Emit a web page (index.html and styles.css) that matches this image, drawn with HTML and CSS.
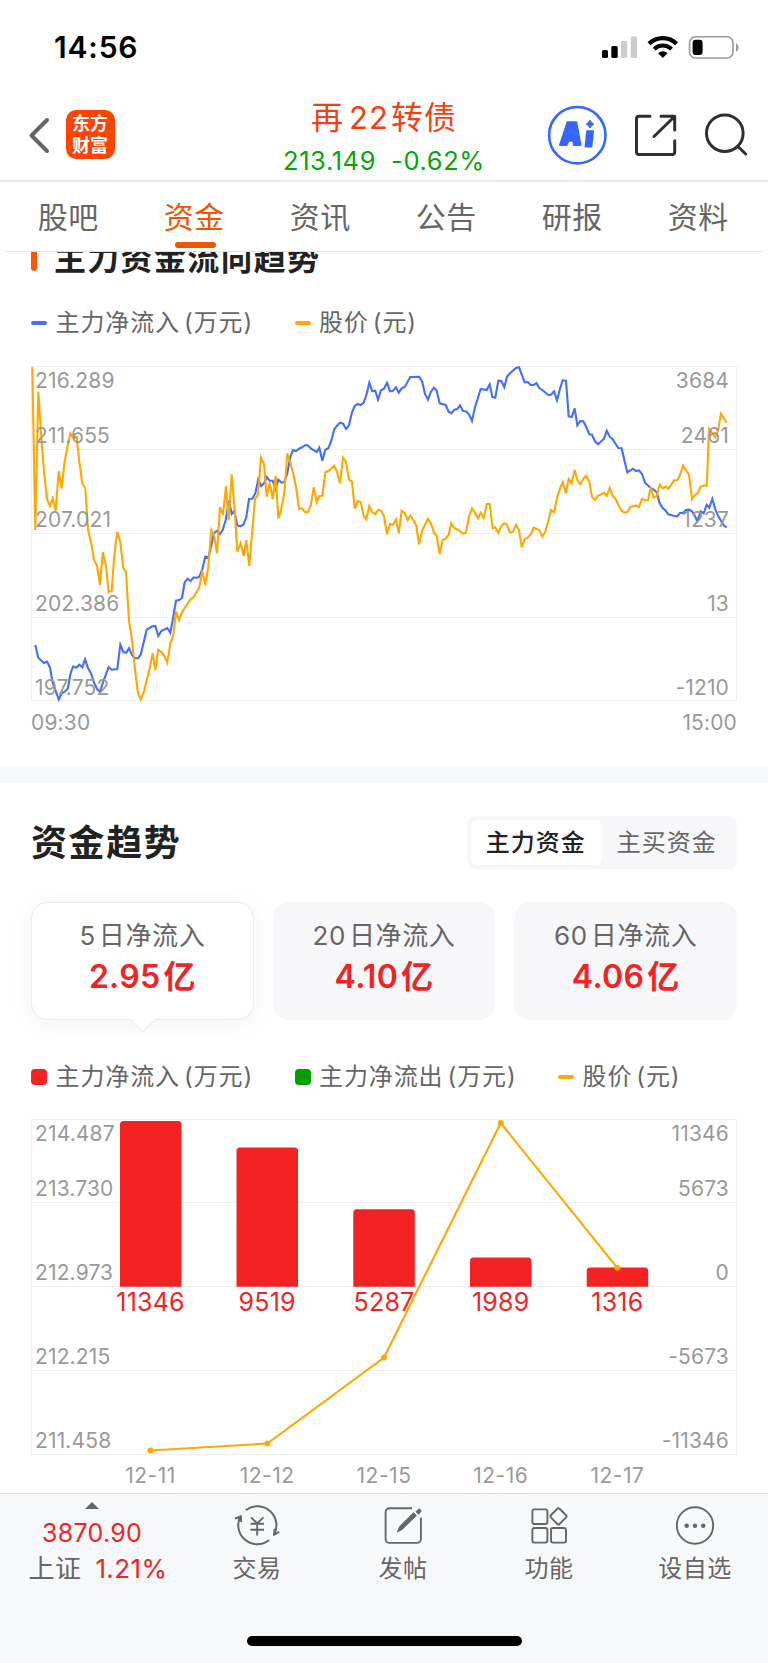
FILE: index.html
```html
<!DOCTYPE html>
<html lang="zh-CN">
<head>
<meta charset="utf-8">
<meta name="viewport" content="width=device-width, initial-scale=1">
<title>再22转债 - 资金</title>
<link rel="stylesheet" href="styles.css">
</head>
<body>
<div class="screen">
  <div class="status">
    <span class="clock">14:56</span>
    <svg class="status-icons" width="140" height="26" viewBox="600 34 140 26">
      <rect x="602" y="50" width="6" height="8" rx="1.5"/>
      <rect x="611.3" y="46" width="6.4" height="12" rx="1.5"/>
      <rect x="621" y="41" width="6.2" height="17" rx="1.5" fill="#ccc"/>
      <rect x="630.7" y="36.3" width="6.3" height="21.7" rx="1.5" fill="#ccc"/>
      <g fill="none" stroke="#000" stroke-width="4.1">
        <path d="M649 43.8a19.5 19.5 0 0 1 27.6 0"/>
        <path d="M654.2 49.1a12.2 12.2 0 0 1 17.2 0"/>
      </g>
      <path d="M662.8 58l-4.7-4.8a6.7 6.7 0 0 1 9.4 0z"/>
      <rect x="689.6" y="36.7" width="43.4" height="21.3" rx="6" fill="none" stroke="#999" stroke-width="1.6"/>
      <rect x="692.6" y="39.8" width="10" height="15.2" rx="3.2"/>
      <path d="M736 43.3c3.4 1.2 3.4 7.200 0 8.400z" fill="#999"/>
    </svg>
  </div>

  <header class="header">
    <div class="head-left">
      <svg class="back" width="22" height="38" viewBox="0 0 22 38"><path d="M19 3 3.500 18.500 19 34" fill="none" stroke="#666" stroke-width="4" stroke-linecap="round" stroke-linejoin="round"/></svg>
      <div class="logo"><span>东方</span><span>财富</span></div>
    </div>
    <div class="head-title">
      <div class="name">再<b>22</b>转债</div>
      <div class="quote"><span>213.149</span><span>-0.62%</span></div>
    </div>
    <svg class="head-icons" width="204" height="62" viewBox="546 104 204 62">
      <circle cx="577.3" cy="135.200" r="28.200" fill="none" stroke="#3666ff" stroke-width="2.600"/>
      <g fill="#3666ff" stroke="#3666ff" stroke-width="2" stroke-linejoin="round">
        <path fill-rule="evenodd" d="M567.500 122.200h8.800l4.200 22.800h-6.500l-.7-4.200h-5l-1.800 4.200h-6.500zM570.500 135.500h2.200l-.5-5z"/>
        <path d="M587.200 131.200h5.800l-1.600 15.300h-5.800z"/>
        <path d="M590 120.200q1.200 2.700 3.900 3.900-2.700 1.200-3.900 3.900-1.200-2.700-3.900-3.900 2.700-1.200 3.900-3.900z" stroke-width="1"/>
      </g>
      <g fill="none" stroke="#2f2f2f" stroke-width="3" stroke-linecap="round" stroke-linejoin="round">
        <path d="M650 116.300H639a2.500 2.500 0 0 0-2.500 2.500v33.200a2.500 2.500 0 0 0 2.500 2.500h33.200a2.500 2.500 0 0 0 2.500-2.500v-11.200M661 116.300h13.700v13.700M673.500 117.500 654 136.500"/>
        <circle cx="724.800" cy="133.200" r="18.300"/>
        <path d="M738 146.500 745.700 154"/>
      </g>
    </svg>
  </header>

  <nav class="tabs">
    <span class="tab">股吧</span>
    <span class="tab on">资金</span>
    <span class="tab">资讯</span>
    <span class="tab">公告</span>
    <span class="tab">研报</span>
    <span class="tab">资料</span>
  </nav>

  <section class="flow">
    <h2 class="flow-title"><i></i><span>主力资金流向趋势</span></h2>
    <div class="legend">
      <span class="key"><i class="dash blue"></i>主力净流入<em>(</em>万元)</span>
      <span class="key"><i class="dash orange"></i>股价<em>(</em>元)</span>
    </div>
    <svg class="chart" width="768" height="386" viewBox="0 356 768 386">
      <g class="grid">
        <path d="M31.500 366.500H736.500V700.500H31.500zM31.500 449.500H736.500M31.500 533.500H736.500M31.500 617.500H736.500"/>
      </g>
      <polyline class="line blue-line" points="35.3,645 38.3,657.7 44,663 47,661.7 50,667.7 52.7,682.7 58.7,699.3 61.7,693.3 64.7,691.7 67.7,689 70.7,672.7 73.3,666.3 76.3,667.7 79.3,664.7 82.3,667.3 85,659.3 88,668 91,673.3 94,682.7 97,689 100,691.7 103,682.3 108.7,667 111.7,669.7 117.3,669 120.3,644.7 123.3,652 126.3,652.7 129,648.3 132,655 135,658.3 138,658.3 140.7,654.7 146.7,629.7 152.3,626.3 155.3,626 158.3,636 161.3,631 167.3,628 170.3,632.7 173.3,616.7 176,600.7 179,600 182,598 184.7,582.3 187.7,578.7 190.7,581 193.7,577.3 196.7,578 199.3,576.7 202.3,569.3 205.3,556.7 208.3,557.7 211,546.7 214,533.3 217,530.7 220,534 222.7,530 225.7,520 229,500.7 231.7,514 234.3,511 237.3,525.3 240.3,526.3 243.3,524.7 246.3,517.3 249,499 252.3,498.7 255.3,493.3 258.3,479.3 261,486 264,483.3 266.7,477 269.7,480.7 272.7,480.7 275.7,489.3 278.3,479.7 281.7,482.7 284.3,482.3 287.3,473.3 290.3,456.7 293,450 296,451 299,448.7 302,447.3 305,445.3 307.7,445.3 310.7,448.3 316.7,452 319.3,447.7 322.3,460.7 325.3,449.7 328.3,448.3 331.3,440.7 334.3,429.3 337,425.7 340,422.7 343,423.7 346,429 349,425.3 352,412.3 354.7,406 357.7,404 360.7,405 363.7,402.7 366.7,394 369.3,382.7 372.3,391.3 375.3,390.7 378,399.7 381,390.3 384,388.7 387,382.7 390,391.3 393,390.7 396,387.3 398.7,392.7 401.7,388.3 404.7,387 410.3,377 419.3,376.7 422.3,382 425,394 428,399.7 431,391.7 434,387.7 436.7,390.7 439.7,403.3 445.7,405 448.7,411.7 451.3,413.3 454.3,409.7 457.3,409 460,405.3 463,411 466,411.3 469,414.3 472,421 475,407.3 480.7,389 486.7,390 489.7,384.3 492.3,397 495.3,397.7 498.3,380.7 501.3,381 504.3,387.3 507,376.7 510,373.3 516,368 519,367.3 524.7,382.3 527.7,382 530.7,385 533.7,385 536.3,383 539.3,388 542.3,390 548.3,395 551,394.7 554,391.3 557,400.3 560,388.7 562.7,380.3 566,380.7 568.7,416.3 571.7,417 574.7,408.3 577.3,425.3 580.3,421 583.3,421.3 586.3,427 589.3,434.3 592,434.7 595,441.3 598,444.3 604,438.7 606.7,430.7 609.7,436.7 612.7,439.3 618.3,448 621.7,448.3 624.3,460 627.3,472.3 633,468.7 636,471 639,470.3 642,474 645,482.7 650.7,488 653.7,489.7 656.7,492.3 659.7,503.3 662.7,508 665.3,510.3 668.3,514.3 674.3,516 677.3,516.3 680,513 683,513 686,510 689,509.7 692,511.3 695,516.3 697.3,521 700.7,511.3 703.7,513.3 706.7,504.7 709.3,507.7 712.3,499 715.3,509.3 718.3,516.3 724,525.7 726.7,527.3"/>
      <polyline class="line orange-line" points="32.3,367.3 35.3,530 38.3,391.7 41.3,436.7 44,471.7 47,499.3 50,506 52.7,498.3 55.7,510.7 58.7,471 61.7,488.3 64.7,460.7 67.7,446 70.3,433.3 73.3,437.7 76.7,436.7 79.3,461.7 82.3,483.7 85.3,488.3 88,530 91,541.7 94,560 97,565.7 100,585 102.7,552.3 105.7,564 108.7,592 111.7,590.7 114.3,555 117.3,531.7 120.3,542.3 123.3,567.7 126,572.3 129,621 132,640 135,670 138,693.3 140.7,699.3 144,691.7 146.7,680 149.7,668.3 152.7,653.3 155.3,670 158.3,649.7 161.3,652 164.3,656 167.3,662.7 170.3,643.3 173.3,635 176,611.7 179,620 182,612.3 190.7,599 193.7,597.3 199.3,587.3 202.3,570.7 205.3,585 208.3,566.7 211.3,530 214,535 217,553.3 220,507 223,515 226,486 228.7,520 231.7,474.3 234.7,510 237.3,551.7 240.7,543.3 243.7,556 246.3,540 249.3,566 252.3,530 255,499.3 258,494.3 261,457.7 264,464.3 266.7,496.7 269.7,482.7 272.7,499.3 275.7,476 278.3,518.3 281.3,509.3 284.3,493.3 287.3,453.3 290.3,462.7 293.3,474.3 296,486.7 299,508.7 302,508.3 305,512 308,512 311,504.3 313.7,487.3 316.7,502 319.3,496 322.3,495.7 325.3,472.3 328.3,471 334.3,465.7 337,472 340,483.3 343,457.7 346,462 349,479.7 352,481.7 354.7,508.7 357.7,501 360.7,502 363.7,515.7 366.3,519.3 369.3,506 372.3,512.3 375.3,514 378.3,509.7 381,510.7 384,516 387,534.3 390,524 393,524.7 396,519.3 398.7,533.3 401.7,510.7 404.7,513 407.7,520 410.3,515.7 413.3,520.3 416.3,525.7 419,544.3 422.3,530.3 428,518.7 431,523.7 434,532.7 436.7,536 439.7,554 442.7,540 445.7,538.7 448.7,534.7 451.3,523.3 454.3,528 460,531 463,533.7 466,532.7 469,516.7 472,508.3 475,513 478,518.3 480.7,512.7 483.7,518 486.7,504 489.7,504 492.7,528.3 495.3,527.3 498.3,533 501.3,526.3 504.3,523 507,524.7 510,532.7 513,531.7 516,525 519,530.3 521.7,547.3 524.7,539 527.7,537.7 530.7,534.3 533.7,527.7 539.3,530 542.3,536.3 545.3,531.7 548.3,520.7 551,510 554,512.3 557,497.7 560,488.3 562.7,482.3 565.7,493.3 568.7,479 571.7,483.3 574.7,470 577.3,480.3 580.3,484.3 583.3,478.7 586.3,476 589.3,481.7 592,497 595,500 598,495.7 604,492.7 606.7,496 609.7,488 612.7,495.7 615.7,499 618.7,505.7 621.7,510.7 624.3,512.7 627.3,512 630.3,507 636,505.7 639,507 642,498.7 645,500.3 648,500.3 650.7,487.3 653.7,497.7 656.7,496 659.7,484.7 662.7,488.3 665.3,486.7 668.3,488.7 674.3,480.3 677.3,480.3 680,475 683,465.7 689,474.7 692,499.3 695,495 697.7,493.3 700.7,486.7 703.7,485.3 706.7,486 709,429 715.3,437.3 718.3,429 721,413.7 726.7,422.7"/>
      <g class="axis">
        <text x="35" y="387.500">216.289</text><text x="35" y="442.500">211.655</text><text x="35" y="526.500">207.021</text><text x="35" y="610.500">202.386</text><text x="35" y="694.500">197.752</text>
        <text x="31" y="729.500">09:30</text>
      </g>
      <g class="axis end">
        <text x="729" y="387.500">3684</text><text x="729" y="442.500">2461</text><text x="729" y="526.500">1237</text><text x="729" y="610.500">13</text><text x="729" y="694.500">-1210</text>
        <text x="737" y="729.500">15:00</text>
      </g>
    </svg>
  </section>

  <section class="trend">
    <div class="trend-head">
      <h2>资金趋势</h2>
      <div class="switch"><span class="on">主力资金</span><span>主买资金</span></div>
    </div>
    <div class="cards">
      <div class="card on"><p>5<u></u>日净流入</p><strong>2.95<u></u>亿</strong></div>
      <div class="card"><p>20<u></u>日净流入</p><strong>4.10<u></u>亿</strong></div>
      <div class="card"><p>60<u></u>日净流入</p><strong>4.06<u></u>亿</strong></div>
    </div>
    <div class="legend">
      <span class="key"><i class="block red"></i>主力净流入<em>(</em>万元)</span>
      <span class="key"><i class="block green"></i>主力净流出<em>(</em>万元)</span>
      <span class="key"><i class="dash orange"></i>股价<em>(</em>元)</span>
    </div>
    <svg class="chart" width="768" height="383" viewBox="0 1110 768 383">
      <g class="grid">
        <path d="M31.500 1119.500H736.500V1454.500H31.500zM31.500 1202.500H736.500M31.500 1286.500H736.500M31.500 1370.500H736.500"/>
      </g>
      <g fill="#f42323">
        <path d="M120 1286.700V1124.500q0-3.500 3.500-3.500h54.500q3.500 0 3.500 3.500V1286.700z"/>
        <path d="M236.500 1286.700V1151q0-3.500 3.500-3.500h54.500q3.500 0 3.500 3.500V1286.700z"/>
        <path d="M353.300 1286.700V1212.800q0-3.500 3.500-3.500h54.500q3.500 0 3.500 3.500V1286.700z"/>
        <path d="M470 1286.700V1261q0-3.500 3.500-3.500h54.500q3.500 0 3.500 3.500V1286.700z"/>
        <path d="M586.700 1286.700V1271q0-3.500 3.500-3.500h54.500q3.500 0 3.500 3.500V1286.700z"/>
      </g>
      <g class="values">
        <text x="150.500" y="1310.500">11346</text><text x="267.200" y="1310.500">9519</text><text x="384" y="1310.500">5287</text><text x="500.700" y="1310.500">1989</text><text x="617.400" y="1310.500">1316</text>
      </g>
      <polyline class="line orange-line" points="150.500,1450.500 267.300,1443.500 384,1357.500 500.700,1123 617.300,1267.800"/>
      <g fill="#ffa800"><circle cx="150.500" cy="1450.500" r="3"/><circle cx="267.300" cy="1443.500" r="3"/><circle cx="384" cy="1357.500" r="3"/><circle cx="500.700" cy="1123" r="3"/><circle cx="617.300" cy="1267.800" r="3"/></g>
      <g class="axis">
        <text x="35" y="1141">214.487</text><text x="35" y="1196.300">213.730</text><text x="35" y="1280.300">212.973</text><text x="35" y="1364.300">212.215</text><text x="35" y="1448.300">211.458</text>
      </g>
      <g class="axis end">
        <text x="729" y="1141">11346</text><text x="729" y="1196.300">5673</text><text x="729" y="1280.300">0</text><text x="729" y="1364.300">-5673</text><text x="729" y="1448.300">-11346</text>
      </g>
      <g class="axis mid">
        <text x="150.500" y="1483">12-11</text><text x="267.200" y="1483">12-12</text><text x="384" y="1483">12-15</text><text x="500.700" y="1483">12-16</text><text x="617.400" y="1483">12-17</text>
      </g>
    </svg>
  </section>

  <footer class="bottom">
    <div class="index">
      <svg width="14" height="7" viewBox="0 0 14 7"><path d="M0 7 7 0l7 7z" fill="#666"/></svg>
      <div class="points">3870.90</div>
      <div class="change"><span>上证</span><b>1.21%</b></div>
    </div>
    <div class="item">
      <svg width="46" height="42" viewBox="234 1504 46 42" fill="none" stroke="#666" stroke-width="2" stroke-linecap="round" stroke-linejoin="round">
        <path d="M246.500 1509.700a19 19 0 0 1 27.800 24.300M278.500 1532.200 274 1534.800l.5-5M268.500 1540.500a19 19 0 0 1-28-24.300M235.700 1518.300l5.200-1.900.2 4.800"/>
        <path d="M251 1517.300l6.200 6.200 6.200-6.200M250.500 1523.700h13.500M250.500 1529.700h13.500M257.200 1523.500v12" stroke-width="1.900" stroke-linecap="butt"/>
      </svg>
      <span>交易</span>
    </div>
    <div class="item">
      <svg width="42" height="42" viewBox="382 1504 42 42" fill="none" stroke="#666" stroke-width="1.900">
        <path d="M412 1508.200H389.600a4 4 0 0 0-4 4v26.700a4 4 0 0 0 4 4h27.300a4 4 0 0 0 4-4V1517.500"/>
        <path d="M397.400 1532l2.200-5.400 14-13.900 2.800 2.800-14 13.700zM416 1511.700l2-2 a1.500 1.500 0 0 1 2.500 2.500l-2 2z" fill="#666" stroke-width="1"/>
      </svg>
      <span>发帖</span>
    </div>
    <div class="item">
      <svg width="42" height="42" viewBox="528 1504 42 42" fill="none" stroke="#666" stroke-width="1.900" stroke-linejoin="round">
        <rect x="532.400" y="1509.400" width="15" height="14.600" rx="2"/>
        <rect x="532.400" y="1528" width="15" height="14.600" rx="2"/>
        <rect x="551" y="1528" width="15" height="14.600" rx="2"/>
        <rect x="552.300" y="1510.200" width="12.300" height="12.300" rx="1.500" transform="rotate(45 558.450 1516.350)"/>
      </svg>
      <span>功能</span>
    </div>
    <div class="item">
      <svg width="42" height="42" viewBox="674 1504 42 42" fill="none" stroke="#666" stroke-width="1.900">
        <circle cx="695" cy="1525.500" r="18.200"/>
        <g fill="#666" stroke="none"><circle cx="686.700" cy="1525.700" r="2.200"/><circle cx="695" cy="1525.700" r="2.200"/><circle cx="703.200" cy="1525.700" r="2.200"/></g>
      </svg>
      <span>设自选</span>
    </div>
  </footer>
  <div class="home"><i></i></div>
</div>
</body>
</html>
```

FILE: styles.css
```css
* { box-sizing: border-box; }
body {
  margin: 0;
  background: #fff;
  color: #666;
  font-family: "Inter", "Noto Sans CJK SC", sans-serif;
}
h2, p { margin: 0; }
i, em, b { font-style: normal; font-weight: inherit; }
u { display: inline-block; width: 3px; text-decoration: none; }
svg { display: block; }
.screen { width: 768px; height: 1663px; overflow: hidden; display: flex; flex-direction: column; }

.status { height: 94px; display: flex; justify-content: space-between; padding: 34px 28px 0 54px; flex: none; }
.clock { font-size: 30px; line-height: 27px; font-weight: 600; color: #000; letter-spacing: 0.8px; }

.header { height: 88px; flex: none; display: grid; grid-template-columns: 240px 1fr 240px; border-bottom: 2px solid #ebebeb; }
.head-left { display: flex; padding: 16px 0 0 28px; }
.back { margin: 7px 0 0; width: 22px; height: 38px; }
.logo {
  width: 49px; height: 49px; margin-left: 15.500px; border-radius: 10px; background: #ff4400; color: #fff;
  display: flex; flex-direction: column; align-items: center; padding-top: 2px;
  font: 700 18px/21.500px "Noto Sans CJK SC", sans-serif;
}
.head-title { text-align: center; }
.name { color: #f43f14; font-size: 32px; line-height: 48px; letter-spacing: 1px; font-weight: 390; }
.name b { margin: 0 2px 0 5px; font-size: 31px; }
.quote { color: #0aa30a; font-size: 25.500px; line-height: 36px; margin-top: 1px; display: flex; justify-content: center; gap: 15px; letter-spacing: 0.6px; }
.head-icons { margin: 10px 0 0 18px; }

.tabs { height: 70px; flex: none; margin: 0 6px; display: flex; border-bottom: 1px solid #e2e2e2; background: #fff; position: relative; z-index: 1; }
.tab { flex: 1; padding-right: 1.500px; text-align: center; font-size: 30px; line-height: 70px; letter-spacing: 0.5px; font-weight: 390; position: relative; }
.tab.on { color: #eb5600; }
.tab.on::after { content: ""; position: absolute; left: 50%; bottom: 3px; width: 41px; height: 6px; margin-left: -20px; border-radius: 3px; background: #eb5600; }

.flow { height: 515px; flex: none; overflow: hidden; }
.flow-title { height: 42px; margin-top: -14px; display: flex; align-items: center; padding-left: 31px; color: #222; font-size: 32px; line-height: 42px; letter-spacing: 1.3px; }
.flow-title i { width: 6px; height: 25px; background: #ff5500; border-radius: 3px; margin-right: 17px; margin-top: -1px; }
.legend { display: flex; padding-left: 31px; }
.flow .legend { height: 76px; align-items: center; padding-top: 10px; }
.key { flex: none; width: 263.500px; display: flex; align-items: center; font-size: 24px; line-height: 34px; letter-spacing: 0.9px; font-weight: 390; white-space: nowrap; }
.key em { margin-left: 4px; }
.dash { width: 16px; height: 4px; border-radius: 2px; margin-right: 8.500px; }
.block { width: 16px; height: 16px; border-radius: 4px; margin-right: 8.500px; }
.blue { background: #426ffb; }
.orange { background: #ffa800; }
.red { background: #f42323; }
.green { background: #009f00; }

.grid { fill: none; stroke: #f0f0f0; stroke-width: 1; }
.line { fill: none; stroke-width: 2.100; stroke-linejoin: miter; }
.blue-line { stroke: #426ffb; }
.orange-line { stroke: #ffa800; }
.axis { fill: #999; font-size: 21px; letter-spacing: 0.15px; }
.end { text-anchor: end; }
.mid, .values { text-anchor: middle; }
.mid { letter-spacing: 0.5px; }
.values { fill: #f42323; font-size: 25px; letter-spacing: 0.2px; }

.trend { flex: none; height: 726px; border-top: 16px solid #f7f8fa; }
.trend-head { display: flex; justify-content: space-between; padding: 33px 31px 0; height: 119px; }
.trend-head h2 { color: #222; font-size: 36px; line-height: 54px; letter-spacing: 1.600px; font-weight: 700; }
.switch { width: 270px; height: 53px; padding: 4px; background: #f7f7fa; border-radius: 8px; display: flex; }
.switch span { flex: 1; padding-right: 1.500px; text-align: center; font-size: 24px; line-height: 46px; letter-spacing: 1px; border-radius: 6px; font-weight: 390; }
.switch .on { background: #fff; color: #222; font-weight: 500; }
.cards { display: grid; grid-template-columns: repeat(3, 1fr); gap: 19px; padding: 0 31px; }
.card { height: 118px; border-radius: 16px; background: #f7f7fa; text-align: center; padding-top: 15px; position: relative; }
.card.on { background: #fff; border: 1px solid #ececec; padding-top: 14px; box-shadow: 0 3px 26px rgba(0, 0, 0, 0.055); }
.card.on::after { content: ""; position: absolute; left: 50%; bottom: -9.500px; width: 17px; height: 17px; margin-left: -8.500px; background: #fff; border: solid #ececec; border-width: 0 1px 1px 0; transform: rotate(45deg); }
.card p { font-size: 26px; line-height: 37px; letter-spacing: 0.600px; font-weight: 390; }
.card strong { display: block; color: #f42323; font-size: 32px; line-height: 45px; font-weight: 600; letter-spacing: 0.300px; }
.trend .legend { height: 90px; align-items: center; padding-top: 24px; }
.trend .chart { height: 383px; }

.bottom { flex: none; height: 126px; background: #f7f8fa; border-top: 1.500px solid #dcdfe0; display: grid; grid-template-columns: 184px repeat(4, 146px); position: relative; }
.index { padding-top: 8px; display: flex; flex-direction: column; align-items: center; }
.points { color: #f42323; font-size: 25px; line-height: 30px; margin-top: 9px; letter-spacing: 0.300px; }
.change { display: flex; gap: 14px; align-items: center; font-size: 26px; line-height: 36px; margin: 3px 0 0 12px; letter-spacing: 0.400px; }
.change b { color: #f42323; }
.item { display: flex; flex-direction: column; align-items: center; padding-top: 10px; }
.item span { font-size: 24px; line-height: 36px; margin-top: 5px; letter-spacing: 0.500px; }
.home { flex: 1; background: #f7f8fa; display: flex; justify-content: center; padding-top: 17px; }
.home i { width: 275px; height: 10px; border-radius: 5px; background: #000; }
```
